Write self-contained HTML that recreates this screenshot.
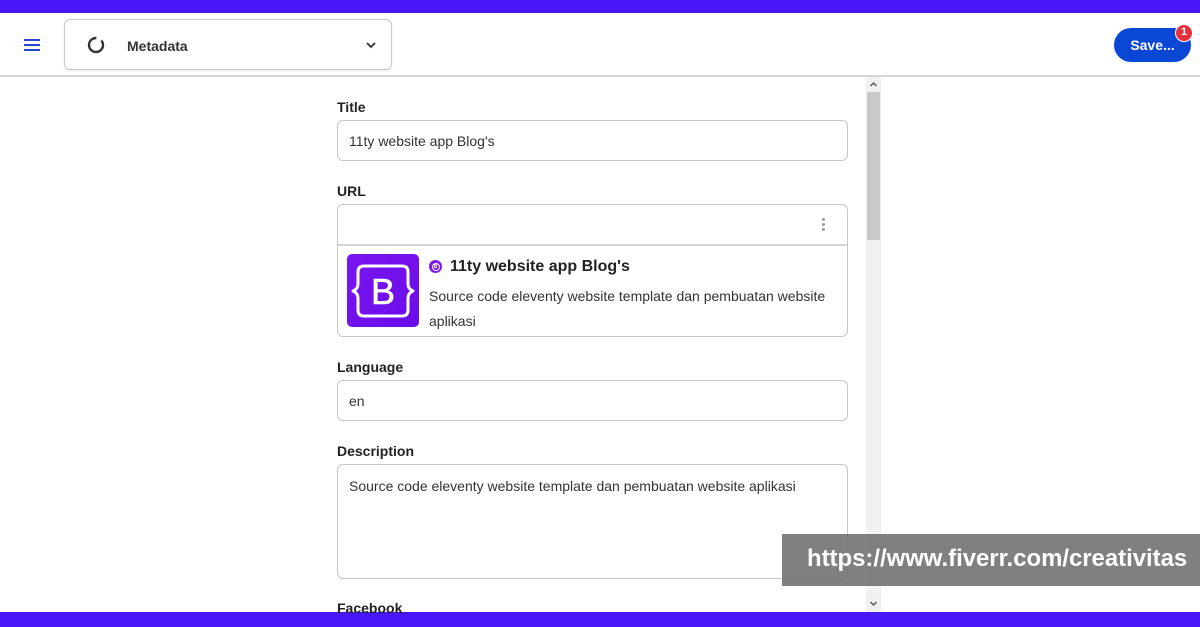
<!DOCTYPE html>
<html><head><meta charset="utf-8">
<style>
*{box-sizing:border-box;margin:0;padding:0}
body{width:1200px;height:627px;overflow:hidden;background:#fff;font-family:"Liberation Sans",sans-serif;color:#222;position:relative}
.abs{position:absolute}
.lbl{position:absolute;left:337px;font-size:14px;font-weight:bold;color:#222}
.inp{position:absolute;left:337px;width:511px;border:1.5px solid #c8c8c8;border-radius:6px;background:#fff;font-size:14px;color:#333;padding-left:11px}
</style></head><body>
<div class="abs" style="left:0;top:0;width:1200px;height:13px;background:#4b16f5"></div>
<div class="abs" style="left:0;top:612px;width:1200px;height:15px;background:#4b16f5"></div>
<div class="abs" style="left:0;top:75px;width:1200px;height:2px;background:#d6d6d6"></div>
<!-- hamburger -->
<div class="abs" style="left:24px;top:38.5px;width:16px;height:2.5px;background:#2448c8"></div>
<div class="abs" style="left:24px;top:43.5px;width:16px;height:2.5px;background:#2448c8"></div>
<div class="abs" style="left:24px;top:48.5px;width:16px;height:2.5px;background:#2448c8"></div>
<!-- select -->
<div class="abs" style="left:64px;top:19px;width:328px;height:51px;border:1.5px solid #ccc;border-radius:6px;box-shadow:0 1px 2px rgba(0,0,0,.1)"></div>
<svg class="abs" style="left:86px;top:35px" width="20" height="20" viewBox="0 0 20 20"><circle cx="10" cy="10" r="7" fill="none" stroke="#333" stroke-width="2.4" stroke-dasharray="38 6" transform="rotate(-40 10 10)"/></svg>
<div class="abs" style="left:127px;top:38px;font-size:14px;font-weight:bold;color:#333">Metadata</div>
<svg class="abs" style="left:365px;top:40px" width="12" height="10" viewBox="0 0 12 10"><path d="M2 3l4 4 4-4" fill="none" stroke="#333" stroke-width="1.8"/></svg>
<!-- save -->
<div class="abs" style="left:1114px;top:28px;width:77px;height:34px;border-radius:17px;background:#0a47d4;color:#fff;font-size:14px;font-weight:bold;text-align:center;line-height:34px">Save...</div>
<div class="abs" style="left:1175px;top:24px;width:18px;height:18px;border-radius:50%;background:#e8303c;border:1.5px solid #fff;color:#fff;font-size:11px;font-weight:bold;text-align:center;line-height:15px">1</div>
<!-- scrollbar -->
<div class="abs" style="left:866px;top:77px;width:15px;height:535px;background:#f1f1f1"></div>
<div class="abs" style="left:867px;top:92px;width:13px;height:148px;background:#c9c9c9"></div>
<svg class="abs" style="left:869px;top:80px" width="9" height="8"><path d="M1.5 6l3-3 3 3" fill="none" stroke="#555" stroke-width="1.5"/></svg>
<svg class="abs" style="left:869px;top:600px" width="9" height="8"><path d="M1.5 2l3 3 3-3" fill="none" stroke="#555" stroke-width="1.5"/></svg>
<!-- form -->
<div class="lbl" style="top:99px">Title</div>
<div class="inp" style="top:120px;height:41px;line-height:40px">11ty website app Blog's</div>
<div class="lbl" style="top:183px">URL</div>
<div class="inp" style="top:204px;height:133px;padding:0"></div>
<div class="abs" style="left:338px;top:244px;width:509px;height:2px;background:#d4d4d4"></div>
<div class="abs" style="left:822px;top:218px;width:3px;height:3px;border-radius:50%;background:#999;box-shadow:0 5px 0 #999,0 10px 0 #999"></div>
<div class="abs" style="left:347px;top:254px;width:72px;height:73px;border-radius:5px;background:linear-gradient(135deg,#7a16f0,#6a0ce8)"></div>
<svg class="abs" style="left:347px;top:254px" width="72" height="73" viewBox="0 0 72 73"><path d="M17 12H55Q61 12 61 18V30Q61 35 66 37Q61 39 61 44V56Q61 62 55 62H17Q11 62 11 56V44Q11 39 6 37Q11 35 11 30V18Q11 12 17 12Z" fill="none" stroke="#fff" stroke-width="3" stroke-linejoin="round"/><text x="36" y="50" text-anchor="middle" font-family="Liberation Sans" font-size="36" fill="#fff" stroke="#fff" stroke-width="0.6">B</text></svg>
<div class="abs" style="left:429px;top:260px;width:13px;height:13px;border-radius:50%;background:#7d18e8"></div>
<div class="abs" style="left:431.5px;top:262.5px;width:8px;height:8px;border-radius:50%;border:1px solid #fff;color:#fff;font-size:5px;text-align:center;line-height:6px;font-weight:bold">B</div>
<div class="abs" style="left:450px;top:258px;font-size:16px;font-weight:bold;color:#222">11ty website app Blog's</div>
<div class="abs" style="left:429px;top:284px;width:415px;font-size:14px;line-height:25px;color:#333">Source code eleventy website template dan pembuatan website aplikasi</div>
<div class="lbl" style="top:359px">Language</div>
<div class="inp" style="top:380px;height:41px;line-height:40px">en</div>
<div class="lbl" style="top:443px">Description</div>
<div class="inp" style="top:464px;height:115px;padding-top:13px">Source code eleventy website template dan pembuatan website aplikasi</div>
<div class="lbl" style="top:600px">Facebook</div>
<!-- watermark -->
<div class="abs" style="left:782px;top:534px;width:418px;height:52px;background:rgba(110,110,110,.88);color:#fff;font-size:23.9px;font-weight:bold;line-height:50px;padding-left:25px;white-space:nowrap">https://www.fiverr.com/creativitas</div>
</body></html>
